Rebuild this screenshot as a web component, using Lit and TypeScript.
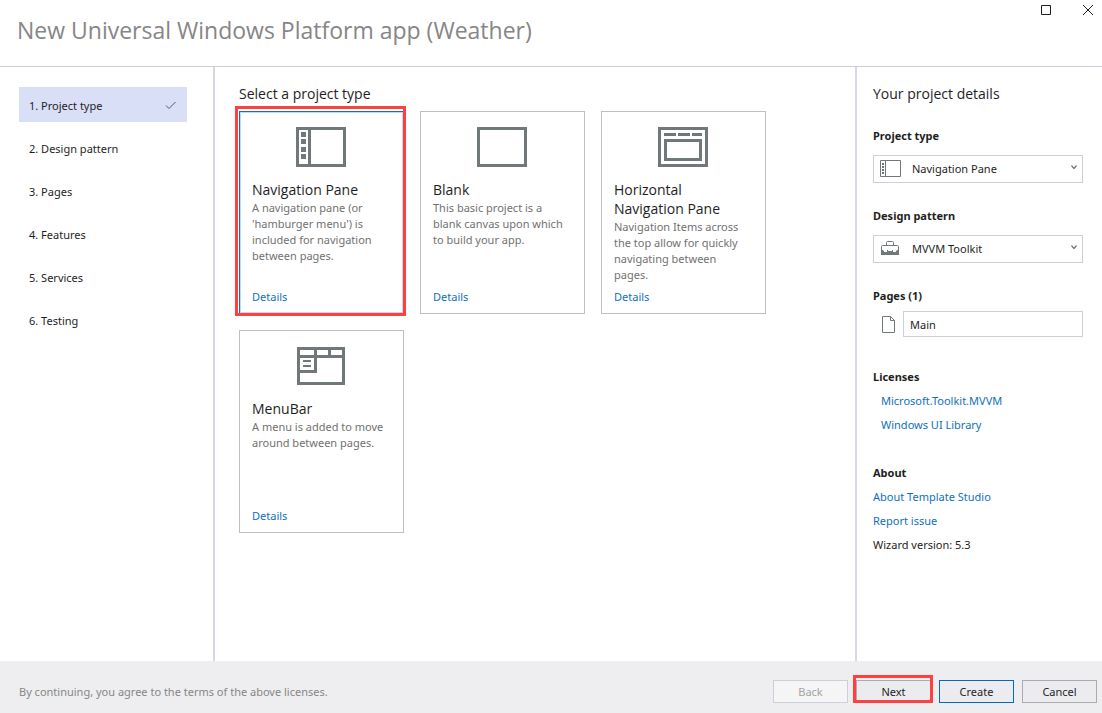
import { LitElement, html, css } from "lit";
import { customElement, state } from "lit/decorators.js";

const paneIcon = html`<svg viewBox="0 0 50 40" width="50" height="40" aria-hidden="true">
  <g fill="#717879">
    <path fill-rule="evenodd" d="M0 0H50V40H0ZM3 3V37H12V3ZM15 3V37H47V3Z" />
    <path d="M5 5h5v5h-5zM5 12h5v5h-5zM5 20h5v5h-5zM5 27h5v5h-5z" />
  </g>
</svg>`;

const blankIcon = html`<svg viewBox="0 0 50 40" width="50" height="40" aria-hidden="true">
  <path fill="#717879" fill-rule="evenodd" d="M0 0H50V40H0ZM3 3V37H47V3Z" />
</svg>`;

const horizontalIcon = html`<svg viewBox="0 0 50 40" width="50" height="40" aria-hidden="true">
  <g fill="#717879">
    <path fill-rule="evenodd" d="M0 0H50V40H0ZM3 3V37H47V3Z" />
    <path d="M6 6h12v3h-12zM20 6h12v3h-12zM34 6h10v3h-10z" />
    <path fill-rule="evenodd" d="M6 12H44V34H6ZM9 15V31H41V15Z" />
  </g>
</svg>`;

const menuIcon = html`<svg viewBox="0 0 50 40" width="50" height="40" aria-hidden="true">
  <g fill="#717879">
    <path fill-rule="evenodd" d="M1 1H49V39H1ZM4 4V9H18V4ZM21 4V9H32V4ZM35 4V9H46V4ZM4 12V24H18V12ZM21 12V27H4V36H46V12Z" />
    <path d="M7 14h8v2h-8zM7 19h8v2h-8z" />
  </g>
</svg>`;

const smallPaneIcon = html`<svg class="icon" viewBox="0 0 21 17" width="21" height="17" aria-hidden="true">
  <path fill="none" stroke="#717879" d="M.5.5h20v16H.5zM5.500.5v16" />
  <path fill="#717879" d="M2 3h2v2H2zM2 6h2v2H2zM2 9h2v2H2zM2 12h2v2H2z" />
</svg>`;

const toolboxIcon = html`<svg class="icon" viewBox="0 0 20 17" width="20" height="17" aria-hidden="true">
  <path fill="none" stroke="#717879" d="M6.500 5.500V2.500q0-1 1-1h5q1 0 1 1v3M1.500 10V6.500q0-1 1-1h15q1 0 1 1V10" />
  <path fill="#717879" d="M1 9l3 2v1h3v-2h1v1h4v-1h1v2h3v-1l3-2v6H1z" />
</svg>`;

const pageIcon = html`<svg viewBox="0 0 13 17" width="13" height="17" aria-hidden="true">
  <path fill="none" stroke="#717879" d="M.5.5h8l4 4v12H.5zM8.500.5v4h4" />
</svg>`;

const projectTypes = [
  { name: "Navigation Pane", icon: paneIcon, text: "A navigation pane (or 'hamburger menu') is included for navigation between pages." },
  { name: "Blank", icon: blankIcon, text: "This basic project is a blank canvas upon which to build your app." },
  { name: "Horizontal Navigation Pane", icon: horizontalIcon, text: "Navigation Items across the top allow for quickly navigating between pages." },
  { name: "MenuBar", icon: menuIcon, text: "A menu is added to move around between pages." },
];

const steps = ["Project type", "Design pattern", "Pages", "Features", "Services", "Testing"];

@customElement("app-root")
export class AppRoot extends LitElement {
  @state() private step = 0;
  @state() private selected = 0;

  static styles = css`
    :host {
      display: flex;
      flex-direction: column;
      min-height: 100vh;
      box-sizing: border-box;
      background: #fff;
      color: #1e1e1e;
      font: 11px/16px "Noto Sans", "Open Sans", sans-serif;
    }
    * { box-sizing: border-box; }
    h1, h2, h3, p, ul, ol { margin: 0; padding: 0; font-weight: 400; }
    ul, ol { list-style: none; }
    svg { display: block; }
    button, input, select { font: inherit; color: inherit; border-radius: 0; }
    a { color: #0e70c0; text-decoration: none; }
    .header {
      display: flex;
      justify-content: space-between;
      align-items: flex-start;
      padding: 0 2px 0 17px;
      border-bottom: 1px solid #cccedb;
    }
    .title {
      padding: 14px 0 20px;
      font-family: "Open Sans", sans-serif;
      font-size: 23px;
      line-height: 32px;
      color: #868686;
    }
    .window { display: flex; gap: 18px; }
    .window button {
      display: grid;
      place-items: center;
      width: 24px;
      height: 20px;
      padding: 0;
      border: 0;
      background: none;
    }
    .body { flex: 1; display: grid; grid-template-columns: 215px 1fr 247px; }
    .steps { padding: 20px 26px 20px 19px; border-right: 2px solid #d7d8e4; }
    .steps ol { display: grid; gap: 8px; }
    .step {
      display: flex;
      justify-content: space-between;
      align-items: center;
      width: 100%;
      height: 35px;
      padding: 2px 10px 0;
      border: 0;
      background: none;
      text-align: left;
    }
    .step.current { background: #dadff8; }
    .types { padding: 17px 24px; }
    .heading { font-family: "Open Sans", sans-serif; font-size: 14px; line-height: 19px; }
    .cards {
      display: grid;
      grid-template-columns: repeat(auto-fill, 165px);
      grid-auto-rows: minmax(203px, auto);
      gap: 16px;
      margin-top: 8px;
    }
    .card {
      position: relative;
      display: flex;
      flex-direction: column;
      padding: 15px 14px 8px 12px;
      border: 1px solid #bfbfbf;
    }
    .card svg { align-self: center; margin-bottom: 13px; }
    .card h3 { margin-bottom: 1px; font-family: "Open Sans", sans-serif; font-size: 14px; line-height: 19px; }
    .card p { color: #717171; }
    .card a { margin-top: auto; align-self: flex-start; }
    .card.selected {
      border-color: #0e70c0 #a9d2ee #a9d2ee #0e70c0;
      box-shadow: inset 0 0 0 1px #b8daf2;
    }
    .card.selected::after {
      content: "";
      position: absolute;
      inset: -6px -3px -3px -5px;
      border: 3px solid #ff4040;
      pointer-events: none;
    }
    .details { padding: 17px 19px 17px 16px; border-left: 2px solid #d7d8e4; }
    .label { display: block; font-size: 11px; font-weight: 700; }
    .field { margin-top: 25px; }
    .combo { display: grid; align-items: center; margin-top: 11px; }
    .combo > * { grid-area: 1 / 1; }
    .combo select {
      appearance: none;
      width: 100%;
      height: 28px;
      padding: 0 24px 0 38px;
      border: 1px solid #cccedb;
      background: #fff;
    }
    .combo svg { z-index: 1; pointer-events: none; }
    .combo .icon { margin: 0 0 2px 7px; }
    .combo .arrow { justify-self: end; margin: 0 6px 4px 0; }
    .page { display: flex; align-items: center; gap: 8px; margin-top: 7px; padding-left: 9px; }
    .page input {
      flex: 1;
      min-width: 0;
      height: 26px;
      padding: 0 6px;
      border: 1px solid #cccedb;
    }
    .group { display: grid; gap: 8px; margin-top: 32px; }
    .licenses { display: grid; gap: 8px; padding-left: 8px; }
    .footer {
      display: flex;
      justify-content: space-between;
      align-items: center;
      padding: 19px 5px 10px 19px;
      background: #eeeef0;
    }
    .terms { color: #868686; }
    .actions { display: flex; gap: 8px; }
    .action {
      position: relative;
      width: 75px;
      height: 23px;
      padding: 0;
      border: 1px solid #acacac;
      background: #ececf0;
    }
    .action:disabled { border-color: #cccedb; background: #f5f5f5; color: #a2a4a5; }
    .action.primary { border-color: #006cbe; }
    .action.marked::after {
      content: "";
      position: absolute;
      inset: -6px -3px -1px -4px;
      border: 3px solid #ff4040;
      pointer-events: none;
    }
  `;

  private arrow = html`<svg class="arrow" viewBox="0 0 6 5" width="6" height="5" aria-hidden="true">
    <path fill="none" stroke="#717171" stroke-width="1.200" d="M.5.5 3 3.500 5.500.5" />
  </svg>`;

  render() {
    return html`
      <header class="header">
        <h1 class="title">New Universal Windows Platform app (Weather)</h1>
        <div class="window">
          <button aria-label="Maximize">
            <svg viewBox="0 0 10 10" width="10" height="10"><path fill="none" stroke="#1e1e1e" d="M.5.5h9v9h-9z" /></svg>
          </button>
          <button aria-label="Close">
            <svg viewBox="0 0 10 10" width="10" height="10"><path stroke="#1e1e1e" d="M0 0 10 10M10 0 0 10" /></svg>
          </button>
        </div>
      </header>
      <div class="body">
        <nav class="steps" aria-label="Steps">
          <ol>
            ${steps.map((name, i) => html`<li>
              <button class="step ${i === this.step ? "current" : ""}" @click=${() => (this.step = i)}>
                <span>${i + 1}. ${name}</span>
                ${i === this.step
                  ? html`<svg viewBox="0 0 12 9" width="12" height="9" aria-hidden="true">
                      <path fill="none" stroke="#55585f" d="M1 4.500 4 7.500 10.500 1" />
                    </svg>`
                  : ""}
              </button>
            </li>`)}
          </ol>
        </nav>
        <main class="types">
          <h2 class="heading">Select a project type</h2>
          <div class="cards">
            ${projectTypes.map((type, i) => html`<article
              class="card ${i === this.selected ? "selected" : ""}"
              @click=${() => (this.selected = i)}
            >
              ${type.icon}
              <h3>${type.name}</h3>
              <p>${type.text}</p>
              <a href="#details">Details</a>
            </article>`)}
          </div>
        </main>
        <aside class="details">
          <h2 class="heading">Your project details</h2>
          <div class="field">
            <label class="label" for="type">Project type</label>
            <div class="combo">
              <select id="type">
                ${projectTypes.map((type) => html`<option>${type.name}</option>`)}
              </select>
              ${smallPaneIcon}${this.arrow}
            </div>
          </div>
          <div class="field">
            <label class="label" for="pattern">Design pattern</label>
            <div class="combo">
              <select id="pattern"><option>MVVM Toolkit</option></select>
              ${toolboxIcon}${this.arrow}
            </div>
          </div>
          <div class="field">
            <label class="label" for="page">Pages (1)</label>
            <div class="page">${pageIcon}<input id="page" type="text" value="Main" /></div>
          </div>
          <section class="group">
            <h3 class="label">Licenses</h3>
            <ul class="licenses">
              <li><a href="#mvvm">Microsoft.Toolkit.MVVM</a></li>
              <li><a href="#winui">Windows UI Library</a></li>
            </ul>
          </section>
          <section class="group">
            <h3 class="label">About</h3>
            <a href="#about">About Template Studio</a>
            <a href="#issue">Report issue</a>
            <p>Wizard version: 5.3</p>
          </section>
        </aside>
      </div>
      <footer class="footer">
        <p class="terms">By continuing, you agree to the terms of the above licenses.</p>
        <div class="actions">
          <button class="action" disabled>Back</button>
          <button class="action marked">Next</button>
          <button class="action primary">Create</button>
          <button class="action">Cancel</button>
        </div>
      </footer>
    `;
  }
}
